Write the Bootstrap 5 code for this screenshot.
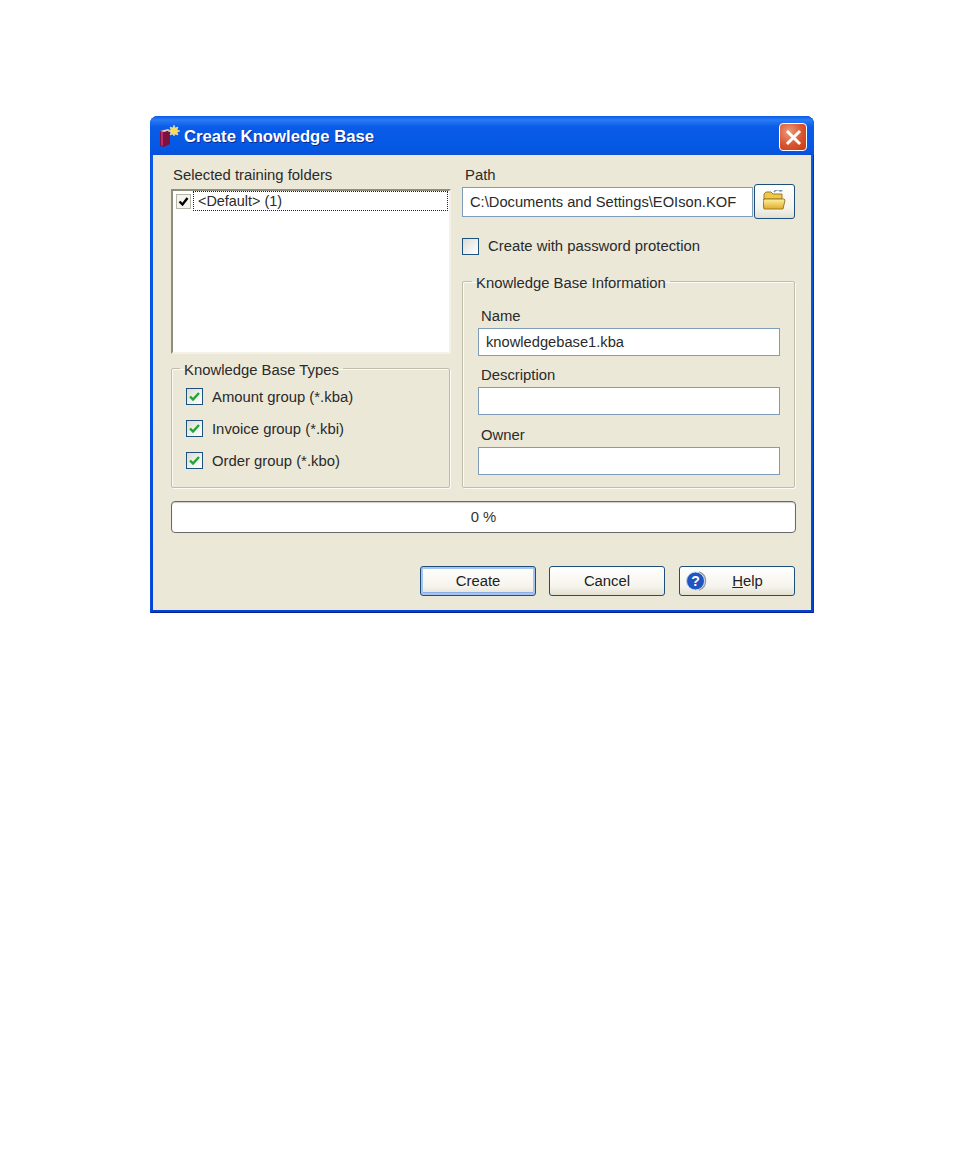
<!DOCTYPE html>
<html lang="en">
<head>
    <meta charset="UTF-8">
    <title>Create Knowledge Base</title>
    <link rel="stylesheet" href="https://cdn.jsdelivr.net/npm/bootstrap@5.3.3/dist/css/bootstrap.min.css">
    <style>
        body { background: #fff; font-family: "Liberation Sans", Arial, sans-serif; font-size: 14.85px; color: #2a2a2a; }
        .xp-window { width: 664px; height: 497px; margin: 116px 0 0 150px; background: linear-gradient(#0a5be8, #0554e3 60%, #0343cf); border-radius: 8px 8px 0 0; padding: 0 3px 3px; display: flex; flex-direction: column; box-shadow: inset 1px 0 #0a4fd8, inset -1px 0 #0331b5, inset 0 -1px #00209a; }
        .xp-title { height: 39px; flex: none; padding: 3px 0 0 6px; color: #fff; font-weight: 700; font-size: 16.7px; text-shadow: 1px 1px #0a2a90; background: linear-gradient(#0a5de6, #2a7bf5 10%, #0a5ce8 28%, #0458e4 82%, #0a50d6); margin: 0 -3px; border-radius: 8px 8px 0 0; }
        .xp-close { width: 28px; height: 28px; padding: 0; border: 1px solid #fff; border-radius: 4px; background: radial-gradient(circle at 35% 30%, #ee9a7c, #d9532c 55%, #c33a15); margin-right: 7px; }
        .xp-client { flex: 1; background: #ebe8d8; padding: 12px 16px 14px 18px; display: flex; flex-direction: column; min-height: 0; }
        .xp-left { width: 280px; }
        .xp-right { width: 333px; margin-left: 11px; }
        .xp-label { line-height: 16px; margin-left: 2px; }
        .xp-right > .xp-label { margin-left: 3px; }
        .xp-list { height: 165px; margin-top: 6px; background: #fff; border: 2px solid; border-color: #8f8d80 #f4f2e8 #f4f2e8 #8f8d80; padding: 0 1px 0 2px; font-size: 14.4px; }
        .xp-mini-check { width: 15px; height: 15px; border: 1px solid #b8b6a8; background: #f5f5f0; margin-left: 1px; flex: none; }
        .xp-list-text { flex: 1; margin-left: 2px; line-height: 18px; height: 20px; padding-left: 4px; border: 1px dotted #222; }
        .xp-group { border: 1px solid #c0bdab; box-shadow: 1px 1px #fbfaf4, inset 1px 1px #fbfaf4; border-radius: 2px; margin: 0; min-width: 0; }
        .xp-group legend { float: none; width: auto; font-size: inherit; line-height: 16px; margin: 0 0 0 -6px; padding: 4px 4px 0; }
        .xp-types { height: 130px; width: 279px; margin-top: 4px; padding: 2px 14px 0; }
        .xp-check { width: 17px; height: 17px; margin: 0; border: 1px solid #1c5180; border-radius: 0; background: linear-gradient(135deg, #dcdcd6, #fff); flex: none; }
        .xp-type-row { height: 32px; gap: 9px; }
        .xp-type-row > span:last-child { padding-top: 2px; }
        .xp-input { height: 28px; border: 1px solid #7f9db9; border-radius: 0; background: #fff; padding: 0 7px; font-size: 14.7px; color: #2a2a2a; line-height: 26px; font-family: inherit; box-shadow: none; }
        .xp-path { flex: 1; height: 30px; min-width: 0; }
        .xp-browse { width: 41px; height: 35px; padding: 0; margin: -3px 0 -2px 1px; }
        .xp-btn { border: 1px solid #1c4f7c; border-radius: 3px; background: linear-gradient(#fff, #f5f4ec 70%, #e3e0d2); color: #222; font-size: inherit; line-height: 1; }
        .xp-btn:hover { border-color: #1c4f7c; background: linear-gradient(#fff, #f5f4ec 70%, #e3e0d2); color: #222; }
        .xp-pass { margin-top: 21px; gap: 9px; line-height: 17px; }
        .xp-info { height: 217px; margin-top: 16px; padding: 0 14px 0 15px; }
        .xp-info .xp-label { margin: 17px 0 0 3px; }
        .xp-info .xp-label + .xp-input { margin-top: 4px; }
        .xp-info .xp-next { margin-top: 11px; }
        .xp-info .xp-last { margin-top: 12px; }
        .xp-bar { height: 32px; margin-top: 13px; width: 625px; border: 1px solid #686868; border-radius: 4px; background: #fff; box-shadow: inset 0 1px 1px #ccc; line-height: 30px; color: #333; }
        .xp-foot { margin-top: auto; gap: 13px; }
        .xp-foot .xp-btn { width: 116px; height: 30px; padding: 0; }
        .xp-default, .xp-default:hover { box-shadow: inset 0 0 0 2px #a9c4ec, inset 0 -1px 0 2px #8aaee6; }
        .xp-foot .xp-help { padding-left: 5px; margin-left: 1px; }
        .xp-help-text { flex: 1; padding-right: 6px; }
    </style>
</head>
<body>
    <div class="xp-window">
        <!-- title bar -->
        <div class="xp-title d-flex align-items-center">
            <svg width="24" height="24" viewBox="0 0 24 24" class="me-1 flex-shrink-0">
                <path d="M4 6l8-2 2 1v14l-6 3-4-1z" fill="#7d1240"/>
                <path d="M5 7l2 0v14l-2-1z" fill="#b8306a"/>
                <path d="M4 6l8-2 2 1-6 2z" fill="#e8d6cc"/>
                <path d="M18 0l1 3 3-1-1 3 3 1-3 1 1 3-3-1-1 2-1-2-3 1 1-3-3-1 3-1-1-3 3 1z" fill="#f6dc58" stroke="#fff8c0" stroke-width=".5"/>
            </svg>
            <span class="flex-grow-1">Create Knowledge Base</span>
            <button class="xp-close d-flex align-items-center justify-content-center" type="button" aria-label="Close">
                <svg width="17" height="17" viewBox="0 0 17 17"><path d="M3 3l11 11M14 3L3 14" stroke="#fff" stroke-width="3" stroke-linecap="square"/></svg>
            </button>
        </div>
        <!-- dialog body -->
        <div class="xp-client">
            <div class="d-flex">
                <div class="xp-left">
                    <div class="xp-label">Selected training folders</div>
                    <div class="xp-list">
                        <div class="d-flex align-items-center">
                            <span class="xp-mini-check d-flex align-items-center justify-content-center">
                                <svg width="11" height="11" viewBox="0 0 11 11"><path d="M1.500 5.500l3 3 5-6.500" fill="none" stroke="#000" stroke-width="2.400"/></svg>
                            </span>
                            <span class="xp-list-text">&lt;Default&gt; (1)</span>
                        </div>
                    </div>
                    <fieldset class="xp-group xp-types">
                        <legend>Knowledge Base Types</legend>
                        <div class="xp-type-row d-flex align-items-center">
                            <span class="xp-check d-flex align-items-center justify-content-center"><svg width="13" height="13" viewBox="0 0 13 13"><path d="M2 6.500l3 3 6-6.500" fill="none" stroke="#22a52c" stroke-width="2.400"/></svg></span>
                            <span>Amount group (*.kba)</span>
                        </div>
                        <div class="xp-type-row d-flex align-items-center">
                            <span class="xp-check d-flex align-items-center justify-content-center"><svg width="13" height="13" viewBox="0 0 13 13"><path d="M2 6.500l3 3 6-6.500" fill="none" stroke="#22a52c" stroke-width="2.400"/></svg></span>
                            <span>Invoice group (*.kbi)</span>
                        </div>
                        <div class="xp-type-row d-flex align-items-center">
                            <span class="xp-check d-flex align-items-center justify-content-center"><svg width="13" height="13" viewBox="0 0 13 13"><path d="M2 6.500l3 3 6-6.500" fill="none" stroke="#22a52c" stroke-width="2.400"/></svg></span>
                            <span>Order group (*.kbo)</span>
                        </div>
                    </fieldset>
                </div>
                <div class="xp-right">
                    <div class="xp-label">Path</div>
                    <div class="d-flex mt-1">
                        <input class="xp-input xp-path" type="text" value="C:\Documents and Settings\EOIson.KOF">
                        <button class="xp-btn xp-browse d-flex align-items-center justify-content-center" type="button" aria-label="Browse">
                            <svg width="24" height="24" viewBox="1 2 24 24">
                                <defs>
                                    <linearGradient id="folderFront" x1="0" y1="0" x2="0" y2="1">
                                        <stop offset="0" stop-color="#fdf0a0"/>
                                        <stop offset="1" stop-color="#e2ac2a"/>
                                    </linearGradient>
                                </defs>
                                <path d="M12 4c2-2.500 5-3 7-1" fill="none" stroke="#7d92b8" stroke-width="1.600"/>
                                <path d="M18 0l3 3-3.500 1z" fill="#7d92b8"/>
                                <path d="M2 20V6l2-2h5l2 2h9v5H2z" fill="#f0c848" stroke="#a07c24"/>
                                <path d="M2 21l-1-9 2-1h19l1 1-2 9z" fill="url(#folderFront)" stroke="#a07c24"/>
                            </svg>
                        </button>
                    </div>
                    <div class="xp-pass d-flex align-items-center">
                        <span class="xp-check"></span>
                        <span>Create with password protection</span>
                    </div>
                    <fieldset class="xp-group xp-info">
                        <legend>Knowledge Base Information</legend>
                        <div class="xp-label">Name</div>
                        <input class="xp-input w-100" type="text" value="knowledgebase1.kba">
                        <div class="xp-label xp-next">Description</div>
                        <input class="xp-input w-100" type="text">
                        <div class="xp-label xp-last">Owner</div>
                        <input class="xp-input w-100" type="text">
                    </fieldset>
                </div>
            </div>
            <div class="xp-bar text-center">0 %</div>
            <div class="xp-foot d-flex justify-content-end">
                <button class="xp-btn xp-default" type="button">Create</button>
                <button class="xp-btn" type="button">Cancel</button>
                <button class="xp-btn xp-help d-flex align-items-center" type="button">
                    <svg width="22" height="22" viewBox="0 0 22 22">
                        <path d="M14 2a9.500 9.500 0 0 1 0 18" fill="none" stroke="#9a9a9a" stroke-width="1.500"/>
                        <circle cx="10.500" cy="11" r="9" fill="#1f55c0" stroke="#c8d6f2"/>
                        <text x="10.500" y="16" text-anchor="middle" font-family="Liberation Sans" font-weight="700" font-size="14" fill="#fff">?</text>
                    </svg>
                    <span class="xp-help-text"><u>H</u>elp</span>
                </button>
            </div>
        </div>
    </div>
    <script src="https://cdn.jsdelivr.net/npm/bootstrap@5.3.3/dist/js/bootstrap.bundle.min.js"></script>
</body>
</html>
